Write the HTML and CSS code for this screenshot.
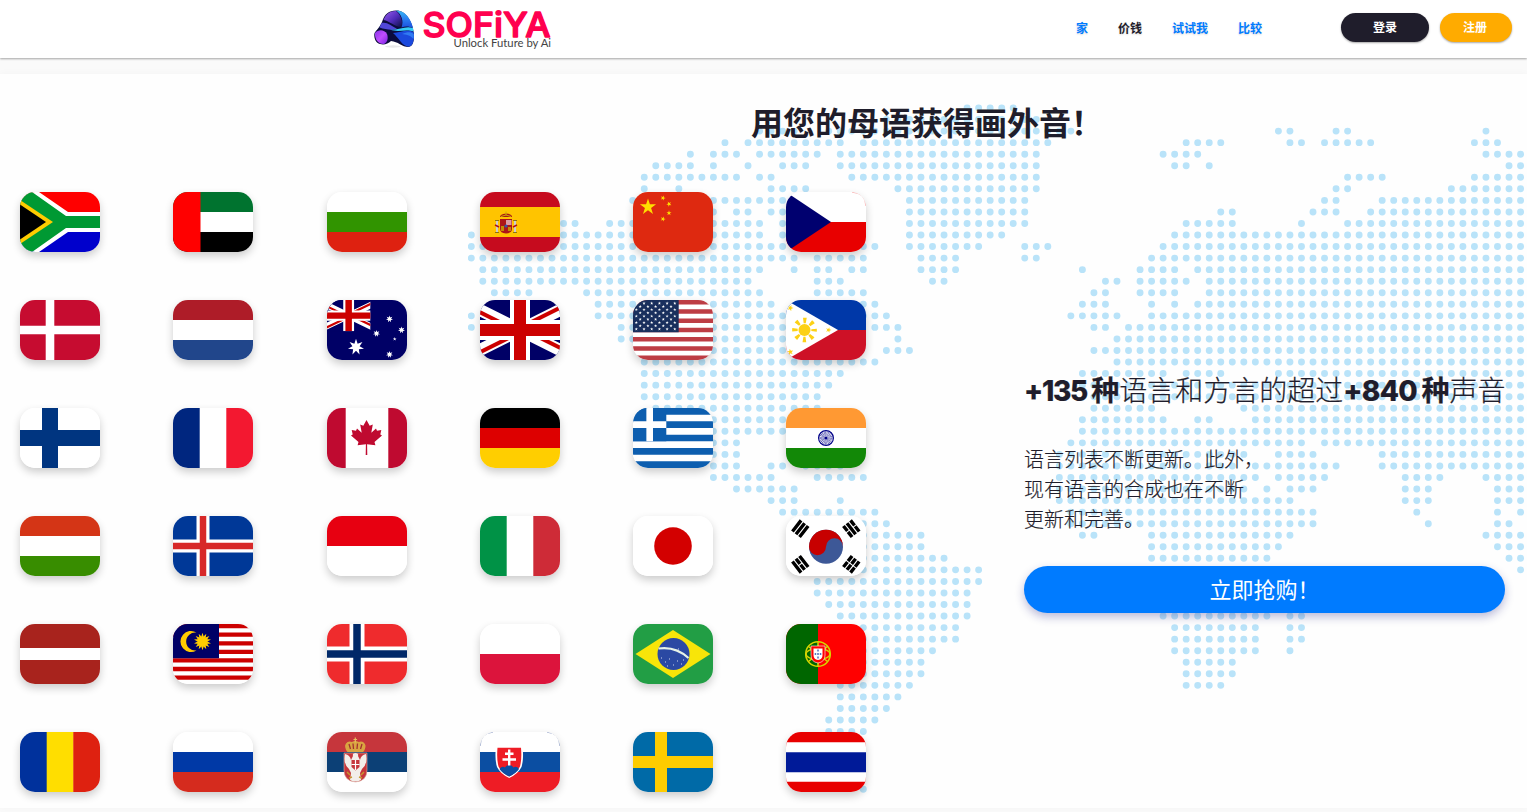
FILE: index.html
```html
<!DOCTYPE html>
<html lang="zh-CN">
<head>
<meta charset="utf-8">
<title>SOFiYA</title>
<link rel="stylesheet" href="styles.css">
</head>
<body>
<svg class="defs" width="0" height="0" aria-hidden="true">
  <defs>
    <polygon id="star5" points="0,-1 .225,-.309 .951,-.309 .363,.118 .588,.809 0,.382 -.588,.809 -.363,.118 -.951,-.309 -.225,-.309"/>
    <polygon id="star7" points="0,-1 .195,-.405 .782,-.623 .439,-.1 .975,.223 .352,.281 .434,.901 0,.45 -.434,.901 -.352,.281 -.975,.223 -.439,-.1 -.782,-.623 -.195,-.405"/>
    <clipPath id="jackClip"><path d="M30 15h30v15zv15h-30zh-30v-15zv-15h30z"/></clipPath>
    <symbol id="jack" viewBox="10 0 40 30" preserveAspectRatio="none">
      <path fill="#006" d="M0 0h60v30H0z"/>
      <path d="M0 0l60 30M60 0L0 30" stroke="#fff" stroke-width="6"/>
      <path d="M0 0l60 30M60 0L0 30" stroke="#c00" stroke-width="4" clip-path="url(#jackClip)"/>
      <path d="M30 0v30M0 15h60" stroke="#fff" stroke-width="10"/>
      <path d="M30 0v30M0 15h60" stroke="#c00" stroke-width="6"/>
    </symbol>
    <g id="starRowA" fill="#fff">
      <use href="#star5" transform="translate(3.300 0) scale(1.700)"/><use href="#star5" transform="translate(11 0) scale(1.700)"/><use href="#star5" transform="translate(18.700 0) scale(1.700)"/><use href="#star5" transform="translate(26.400 0) scale(1.700)"/><use href="#star5" transform="translate(34.100 0) scale(1.700)"/><use href="#star5" transform="translate(41.800 0) scale(1.700)"/>
    </g>
    <g id="starRowB" fill="#fff">
      <use href="#star5" transform="translate(7.200 0) scale(1.700)"/><use href="#star5" transform="translate(14.900 0) scale(1.700)"/><use href="#star5" transform="translate(22.600 0) scale(1.700)"/><use href="#star5" transform="translate(30.300 0) scale(1.700)"/><use href="#star5" transform="translate(38 0) scale(1.700)"/>
    </g>
    <linearGradient id="lgA" x1="0" y1="0" x2="1" y2="1"><stop offset="0" stop-color="#9a5cf0"/><stop offset=".55" stop-color="#4d2bb8"/><stop offset="1" stop-color="#0b1040"/></linearGradient>
    <linearGradient id="lgB" x1="0" y1="0" x2="0" y2="1"><stop offset="0" stop-color="#37b8f5"/><stop offset=".5" stop-color="#2a7df0"/><stop offset="1" stop-color="#1a4fe0"/></linearGradient>
    <linearGradient id="lgC" x1="0" y1="0" x2="1" y2="1"><stop offset="0" stop-color="#8a34e8"/><stop offset=".5" stop-color="#c04dff"/><stop offset="1" stop-color="#7a22e0"/></linearGradient>
  </defs>
</svg>

<header class="topbar">
  <a class="brand" href="#">
    <svg width="180" height="48" viewBox="373 3 180 48">
      <ellipse cx="393" cy="45.500" rx="8" ry="1.200" fill="#e8e8ea"/>
      <path d="M374.300 33C375 30 379.500 27 382 21C384.500 13 389 9.500 396 9.500C405 9 412.500 20 413.800 32C414.500 40 413 45.500 408.500 46C402 46 398 40.500 391 40C388 43 384 44 380 43C376 42 374 38 374.300 33Z" fill="#0b0c3c"/>
      <path d="M383.500 19C386 12.500 391 9.600 396 10C400 13 403 19 402 26C395 26.500 390 20 383.500 19Z" fill="url(#lgA)"/>
      <path d="M396 9.500C405 9 411 18 413 27C409 25 405 25 401.500 26.500C404 20 401.500 13 396 9.500Z" fill="url(#lgB)"/>
      <path d="M381.500 22C387 20.500 391 25 397 27.500C392 30 386 28.500 379.500 26.500Z" fill="#5147d8"/>
      <path d="M390 28.500C398 30 404 24.500 413 27L413.600 30.500C405 27.500 399 32 390 28.500Z" fill="#35cdf7"/>
      <path d="M393 32C400 31 408 28 413.600 31C414.600 39 413 45.500 408.500 45.700C402 45 399 37 393 32Z" fill="#1b49dd"/>
      <path d="M402 33C408 30.500 411 31 413.700 33C413.900 35 413.800 37 413.600 38C410 34 406 33.500 402 33Z" fill="#2f7af2"/>
      <path d="M375 32C378 28.500 384 28 387 33C388.500 37 387.500 41.500 384 43C379 43.500 374.500 39 375 32Z" fill="url(#lgC)"/>
      <text x="422.500" y="35.500" class="brand-name" textLength="128" lengthAdjust="spacingAndGlyphs">SOFiYA</text>
      <text x="453.500" y="45.500" class="brand-tag" textLength="97.500" lengthAdjust="spacingAndGlyphs">Unlock Future by Ai</text>
    </svg>
  </a>
  <nav class="nav">
    <a href="#">家</a><a href="#" class="current">价钱</a><a href="#">试试我</a><a href="#">比较</a>
  </nav>
  <div class="account">
    <a class="pill pill-dark" href="#">登录</a>
    <a class="pill pill-amber" href="#">注册</a>
  </div>
</header>

<main class="hero">
  <svg class="map" width="1059" height="701" viewBox="-.286 -.78 91.845 60.71" preserveAspectRatio="none">
    <path class="dots" d="M43 0h4.100M36 1h13.100M25 2h3.100M31 2h21.100M70 2h1.100M75 2h1.100M88 2h.1
    M22 3h.1M24 3h8.100M34 3h16.100M62 3h3.100M71 3h1.100M74 3h4.100M87 3h2.100
    M19 4h.1M21 4h2.100M25 4h5.100M32 4h17.100M60 4h3.100M88 4h3.100
    M16 5h3.100M21 5h.1M24 5h.1M27 5h2.100M32 5h17.100M61 5h1.100M64 5h.1M90 5h1.100
    M15 6h8.100M25 6h1.100M33 6h16.100M76 6h3.100M87 6h4.100
    M15 7h.1M18 7h.1M26 7h3.100M37 7h12.100M75 7h1.100M85 7h6.100
    M14 8h13.100M38 8h10.100M74 8h1.100M79 8h12.100
    M21 9h.1M23 9h1.100M26 9h1.100M38 9h10.100M65 9h1.100M73 9h2.100M78 9h13.100
    M8 10h1.100M12 10h2.100M21 10h4.100M27 10h.1M38 10h10.100M62 10h4.100M72 10h.1M76 10h15.100
    M0 11h.1M8 11h17.100M27 11h.1M38 11h8.100M61 11h30.100
    M0 12h27.100M34 12h1.100M38 12h6.100M48 12h2.100M60 12h31.100
    M0 13h28.100M30 13h4.100M39 13h3.100M48 13h1.100M59 13h32.100
    M1 14h24.100M28 14h.1M30 14h1.100M33 14h1.100M39 14h3.100M53 14h.1M58 14h3.100M63 14h28.100
    M1 15h23.100M30 15h2.100M40 15h1.100M55 15h1.100M58 15h4.100M64 15h27.100
    M2 16h3.100M10 16h15.100M30 16h4.100M54 16h1.100M58 16h3.100M64 16h27.100
    M11 17h15.100M34 17h1.100M53 17h2.100M59 17h.1M61 17h.1M63 17h28.100
    M0 18h.1M11 18h16.100M34 18h2.100M52 18h4.100M59 18h32.100
    M0 19h.1M13 19h14.100M35 19h2.100M54 19h1.100M57 19h34.100
    M13 20h14.100M37 20h.1M56 20h35.100M15 21h13.100M36 21h2.100M54 21h37.100
    M15 22h20.100M56 22h35.100M15 23h17.100M53 23h7.100M62 23h3.100M70 23h21.100
    M15 24h16.100M53 24h38.100M15 25h15.100M54 25h37.100
    M16 26h14.100M54 26h5.100M67 26h24.100M21 27h9.100M53 27h7.100M63 27h1.100M68 27h23.100
    M21 28h9.100M53 28h38.100M21 29h2.100M52 29h20.100M74 29h17.100
    M21 30h2.100M51 30h16.100M70 30h3.100M79 30h12.100
    M21 31h2.100M26 31h1.100M29 31h3.100M51 31h15.100M68 31h7.100M79 31h12.100
    M21 32h5.100M30 32h4.100M51 32h17.100M70 32h4.100M81 32h3.100M88 32h3.100
    M23 33h5.100M51 33h16.100M69 33h.1M71 33h2.100M81 33h2.100M89 33h2.100
    M26 34h2.100M32 34h.1M51 34h20.100M81 34h2.100M89 34h2.100
    M27 35h8.100M52 35h21.100M82 35h.1M89 35h.1M91 35h.1
    M34 36h2.100M52 36h21.100M83 36h.1M89 36h1.100
    M34 37h5.100M53 37h1.100M59 37h12.100M88 37h3.100
    M34 38h5.100M59 38h11.100M89 38h2.100M34 39h7.100M59 39h10.100M90 39h1.100
    M34 40h10.100M59 40h10.100M91 40h.1M30 41h14.100M30 42h13.100M31 43h12.100
    M32 44h11.100M60 44h9.100M71 44h1.100M34 45h8.100M61 45h7.100M71 45h1.100
    M34 46h8.100M61 46h7.100M71 46h1.100M34 47h6.100M61 47h7.100M71 47h.1
    M34 48h5.100M62 48h4.100M34 49h5.100M62 49h4.100M32 50h6.100M62 50h3.100
    M32 51h5.100M32 52h4.100M31 53h4.100M31 54h3.100M34 59h.1"/>
  </svg>

  <h1 class="title">用您的母语获得画外音！</h1>

  <div class="columns">
    <div class="flags">
      <svg class="flag" viewBox="0 0 80 60"><path fill="red" d="M0 0h80v30H0z"/><path fill="#00c" d="M0 30h80v30H0z"/><path fill="#fff" d="M0 0h19l29 20h32v20H48L19 60H0z"/><path fill="#093" d="M0 0h12l34 24h34v12H46L12 60H0z"/><path fill="#fc0" d="M0 8l33 22L0 52z"/><path d="M0 12.500L26 30 0 47.500z"/></svg>
      <svg class="flag" viewBox="0 0 80 60"><path fill="#fff" d="M0 0h80v60H0z"/><path fill="#00732f" d="M0 0h80v20H0z"/><path d="M0 40h80v20H0z"/><path fill="red" d="M0 0h27.500v60H0z"/></svg>
      <svg class="flag" viewBox="0 0 80 60"><path fill="#fff" d="M0 0h80v20H0z"/><path fill="#319400" d="M0 20h80v20H0z"/><path fill="#de2110" d="M0 40h80v20H0z"/></svg>
      <svg class="flag" viewBox="0 0 80 60"><path fill="#c60b1e" d="M0 0h80v60H0z"/><path fill="#ffc400" d="M0 15h80v30H0z"/><path fill="#ad1519" d="M20 25q0-3 6-3.500 6 .5 6 3.500z"/><path d="M21 24.500q5-3 10 0M26 19.500v4" stroke="#c8b100" fill="none"/><path fill="#ccc" d="M16 29h2v11h-2zM34 29h2v11h-2z"/><path d="M15 28.500h4M33 28.500h4M15 40.500h4M33 40.500h4" stroke="#8a7416"/><path d="M15 33l4 2M33 35l4-2" stroke="#ad1519" stroke-width="1.500"/><path fill="#ad1519" d="M20 27h12v10q0 4-6 4.500-6-.5-6-4.500z"/><path fill="#db9aa5" d="M26 28h5.500v5H26z"/><path fill="#c8b100" d="M21 34h3v5h-3zM28 35h3v4h-3z" opacity=".75"/><circle cx="26" cy="34" r="1.600" fill="#3355a8"/></svg>
      <svg class="flag" viewBox="0 0 80 60"><path fill="#de2910" d="M0 0h80v60H0z"/><g fill="#ffde00"><use href="#star5" transform="translate(15 15) scale(8.500)"/><use href="#star5" transform="translate(30 6) rotate(20) scale(2.700)"/><use href="#star5" transform="translate(36 12) rotate(45) scale(2.700)"/><use href="#star5" transform="translate(36 21) scale(2.700)"/><use href="#star5" transform="translate(30 27) rotate(20) scale(2.700)"/></g></svg>
      <svg class="flag" viewBox="0 0 80 60"><path fill="#fff" d="M0 0h80v30H0z"/><path fill="#e80000" d="M0 30h80v30H0z"/><path fill="#00006f" d="M0 0l45 30L0 60z"/><path d="M66 .2Q79.500 1 79.800 14" fill="none" stroke="#e80000" stroke-width=".5" opacity=".6"/></svg>

      <svg class="flag" viewBox="0 0 80 60"><path fill="#c60c30" d="M0 0h80v60H0z"/><path d="M30 0v60M0 30h80" stroke="#fff" stroke-width="8.600"/></svg>
      <svg class="flag" viewBox="0 0 80 60"><path fill="#fff" d="M0 0h80v60H0z"/><path fill="#ae1c28" d="M0 0h80v20H0z"/><path fill="#21468b" d="M0 40h80v20H0z"/></svg>
      <svg class="flag" viewBox="0 0 80 60"><path fill="#006" d="M0 0h80v60H0z"/><use href="#jack" width="43.300" height="31.300"/><g fill="#fff"><use href="#star7" transform="translate(29 47) scale(8.200)"/><use href="#star7" transform="translate(62.500 19) scale(3.600)"/><use href="#star7" transform="translate(49.500 33.500) scale(3.600)"/><use href="#star7" transform="translate(74.500 30) scale(3.600)"/><use href="#star5" transform="translate(67.700 39) scale(2)"/><use href="#star7" transform="translate(62.500 54.500) scale(3.600)"/></g></svg>
      <svg class="flag" viewBox="0 0 80 60"><use href="#jack" width="80" height="60"/></svg>
      <svg class="flag" viewBox="0 0 80 60"><path fill="#fff" d="M0 0h80v60H0z"/><path d="M0 2.300h80M0 11.540h80M0 20.770h80M0 30h80M0 39.230h80M0 48.460h80M0 57.700h80" stroke="#bd3d44" stroke-width="4.615"/><path fill="#192f5d" d="M0 0h45.700v32.300H0z"/><use href="#starRowA" y="3.300"/><use href="#starRowB" y="6.500"/><use href="#starRowA" y="9.700"/><use href="#starRowB" y="12.900"/><use href="#starRowA" y="16.200"/><use href="#starRowB" y="19.400"/><use href="#starRowA" y="22.600"/><use href="#starRowB" y="25.900"/><use href="#starRowA" y="29.100"/></svg>
      <svg class="flag" viewBox="0 0 80 60"><path fill="#0038a8" d="M0 0h80v30H0z"/><path fill="#ce1126" d="M0 30h80v30H0z"/><path fill="#fff" d="M0 0l52 30L0 60z"/><circle cx="18.500" cy="30" r="6" fill="#fcd116"/><circle cx="18.500" cy="30" r="9.600" fill="none" stroke="#fcd116" stroke-width="5.500" stroke-dasharray="3 4.540" stroke-dashoffset="1.500"/><g fill="#fcd116"><use href="#star5" transform="translate(4.300 8) rotate(20) scale(3.300)"/><use href="#star5" transform="translate(4.300 52) rotate(-10) scale(3.300)"/><use href="#star5" transform="translate(42.500 30) rotate(90) scale(3)"/></g></svg>

      <svg class="flag" viewBox="0 0 80 60"><path fill="#fff" d="M0 0h80v60H0z"/><path d="M30 0v60M0 30h80" stroke="#003580" stroke-width="16"/></svg>
      <svg class="flag" viewBox="0 0 80 60"><path fill="#fff" d="M0 0h80v60H0z"/><path fill="#00267f" d="M0 0h26.700v60H0z"/><path fill="#f31830" d="M53.300 0H80v60H53.300z"/></svg>
      <svg class="flag" viewBox="0 0 80 60"><path fill="#fff" d="M0 0h80v60H0z"/><path fill="#bf0a30" d="M0 0h18.700v60H0zM61.300 0H80v60H61.300z"/><path fill="#bf0a30" d="M39.500 12l3.200 5.800 3.100-1.300-1.500 8.300 4.700-4.200 1 2.200 4.300-.9-1 4.500 1.700 1.200-7.500 6.400.9 3.200-8.300-1 .2 10.800h-1.600l.2-10.800-8.300 1 .9-3.200-7.500-6.400 1.700-1.200-1-4.500 4.300.9 1-2.200 4.700 4.200-1.500-8.300 3.100 1.300z"/></svg>
      <svg class="flag" viewBox="0 0 80 60"><path d="M0 0h80v20H0z"/><path fill="#d00" d="M0 20h80v20H0z"/><path fill="#ffce00" d="M0 40h80v20H0z"/></svg>
      <svg class="flag" viewBox="0 0 80 60"><path fill="#fff" d="M0 0h80v60H0z"/><path d="M0 3.300h80M0 16.700h80M0 30h80M0 43.300h80M0 56.700h80" stroke="#0d5eaf" stroke-width="6.670"/><path fill="#0d5eaf" d="M0 0h33.300v33.300H0z"/><path d="M16.700 0v33.300M0 16.700h33.300" stroke="#fff" stroke-width="6.670"/></svg>
      <svg class="flag" viewBox="0 0 80 60"><path fill="#f93" d="M0 0h80v20H0z"/><path fill="#fff" d="M0 20h80v20H0z"/><path fill="#128807" d="M0 40h80v20H0z"/><g fill="none" stroke="#008"><circle cx="40" cy="30" r="7.400" stroke-width="1.200"/><circle cx="40" cy="30" r="4" stroke-width="5" stroke-dasharray=".5 .55" opacity=".75"/></g><circle cx="40" cy="30" r="1.600" fill="#008"/></svg>

      <svg class="flag" viewBox="0 0 80 60"><path fill="#d43516" d="M0 0h80v20H0z"/><path fill="#fff" d="M0 20h80v20H0z"/><path fill="#388d00" d="M0 40h80v20H0z"/></svg>
      <svg class="flag" viewBox="0 0 80 60"><path fill="#003897" d="M0 0h80v60H0z"/><path d="M30 0v60M0 30h80" stroke="#fff" stroke-width="13"/><path d="M30 0v60M0 30h80" stroke="#d72828" stroke-width="6.500"/></svg>
      <svg class="flag" viewBox="0 0 80 60"><path fill="#e70011" d="M0 0h80v30H0z"/><path fill="#fff" d="M0 30h80v30H0z"/></svg>
      <svg class="flag" viewBox="0 0 80 60"><path fill="#fff" d="M0 0h80v60H0z"/><path fill="#009246" d="M0 0h26.700v60H0z"/><path fill="#ce2b37" d="M53.300 0H80v60H53.300z"/></svg>
      <svg class="flag" viewBox="0 0 80 60"><path fill="#fff" d="M0 0h80v60H0z"/><circle cx="40" cy="30" r="18.800" fill="#d30000"/></svg>
      <svg class="flag" viewBox="0 0 80 60"><path fill="#fff" d="M0 0h80v60H0z"/><circle cx="40" cy="30.700" r="17" fill="#3d5897"/><path fill="#c70000" d="M23 30.700a17 17 0 0 1 34 0a8.500 8.500 0 0 0-17 0a8.500 8.500 0 0 1-17 0z"/><g stroke="#000" stroke-width="3.400" fill="none"><path transform="translate(14.300 12.700) rotate(-52)" d="M-7-4.500H7M-7 0H7M-7 4.500H7"/><path transform="translate(65.300 12.700) rotate(52)" d="M-7-4.500h6.500M.5-4.500H7M-7 0H7M-7 4.500h6.500M.5 4.500H7"/><path transform="translate(14.300 48.300) rotate(52)" d="M-7-4.500H7M-7 0h6.500M.5 0H7M-7 4.500H7"/><path transform="translate(65.300 48.300) rotate(-52)" d="M-7-4.500h6.500M.5-4.500H7M-7 0h6.500M.5 0H7M-7 4.500h6.500M.5 4.500H7"/></g></svg>

      <svg class="flag" viewBox="0 0 80 60"><path fill="#a8231d" d="M0 0h80v60H0z"/><path fill="#fff" d="M0 24h80v12H0z"/></svg>
      <svg class="flag" viewBox="0 0 80 60"><path fill="#fff" d="M0 0h80v60H0z"/><path d="M0 2.140h80M0 10.710h80M0 19.290h80M0 27.860h80M0 36.430h80M0 45h80M0 53.570h80" stroke="#c00" stroke-width="4.290"/><path fill="#006" d="M0 0h46v34.300H0z"/><path fill="#fc0" d="M23.500 8.600a10.500 10.500 0 1 0 0 17.800 9 9 0 1 1 0-17.800z"/><g fill="#fc0"><use href="#star7" transform="translate(29.500 17.500) scale(8.700)"/><use href="#star7" transform="translate(29.500 17.500) rotate(25.700) scale(8.700)"/></g></svg>
      <svg class="flag" viewBox="0 0 80 60"><path fill="#ef2b2d" d="M0 0h80v60H0z"/><path d="M30 0v60M0 30h80" stroke="#fff" stroke-width="15"/><path d="M30 0v60M0 30h80" stroke="#002868" stroke-width="7.500"/></svg>
      <svg class="flag" viewBox="0 0 80 60"><path fill="#fff" d="M0 0h80v30H0z"/><path fill="#dc143c" d="M0 30h80v30H0z"/></svg>
      <svg class="flag" viewBox="0 0 80 60"><path fill="#229e45" d="M0 0h80v60H0z"/><path fill="#f8e509" d="M2.500 30L40 6l37.500 24L40 54z"/><circle cx="40.500" cy="30" r="16" fill="#2b49a3"/><path d="M25.500 24.500q17-2.500 30 9.500" fill="none" stroke="#e6f2e8" stroke-width="2.200"/><path d="M28 34h1M32 38h1M36 35h1M40 41h1M44 37h1M48 40h1M34 42h1M50 36h1M45 25h1" stroke="#cfd8ee"/></svg>
      <svg class="flag" viewBox="0 0 80 60"><path fill="red" d="M0 0h80v60H0z"/><path fill="#060" d="M0 0h32v60H0z"/><g fill="none" stroke="#d6d500" stroke-width="1.500"><circle cx="32" cy="30" r="12.300"/><ellipse cx="32" cy="30" rx="12" ry="5.500"/><path d="M32 17.500v25M22.500 22.500l19 15M41.500 22.500l-19 15"/></g><path fill="red" stroke="#fff" stroke-width=".6" d="M25 22h14v9q0 7-7 8-7-1-7-8z"/><path fill="#fff" d="M27.500 24.500h9v6.500q0 4.500-4.500 5-4.500-.5-4.500-5z"/><path fill="#5a75c0" d="M31.200 25.500h1.600v2h-1.600zM31.200 29h1.600v2h-1.600zM28.700 29h1.500v2h-1.500zM33.800 29h1.500v2h-1.500zM31.200 32.500h1.600v2h-1.600z"/></svg>

      <svg class="flag" viewBox="0 0 80 60"><path fill="#00319c" d="M0 0h27v60H0z"/><path fill="#ffde00" d="M26.700 0h27v60h-27z"/><path fill="#de2110" d="M53.300 0H80v60H53.300z"/></svg>
      <svg class="flag" viewBox="0 0 80 60"><path fill="#fff" d="M0 0h80v20H0z"/><path fill="#0039a6" d="M0 20h80v20H0z"/><path fill="#d52b1e" d="M0 40h80v20H0z"/></svg>
      <svg class="flag" viewBox="0 0 80 60"><path fill="#c6363c" d="M0 0h80v20H0z"/><path fill="#0c4076" d="M0 20h80v20H0z"/><path fill="#fff" d="M0 40h80v20H0z"/><path fill="#d9a441" d="M20.500 20q-4-5-1.500-8.500 2-3 6-1.500 3.300-2 6.600 0 4-1.500 6 1.500 2.500 3.500-1.500 8.500z"/><path d="M28.300 5.500v5M26.500 7.500h3.600" stroke="#e6c060" stroke-width="1.200"/><path d="M22 12l1.500 5M26 11.500l.5 5.500M30.500 11.500l-.5 5.500M35 12l-1.500 5" stroke="#a53030" stroke-width="1.300"/><path fill="#c6363c" stroke="#d9b3a5" stroke-width=".6" d="M17 21h23v17q0 11-11.500 12Q17 49 17 38z"/><path fill="#f2eee9" d="M18 22q5 1 6 6l2-4q-1-3 2.500-3t2.500 3l2 4q1-5 6-6 2 10-4 15l-2 4 1 7q-6 3-11 0l1-7-2-4q-6-5-4-15z"/><path fill="#c6363c" d="M24.500 28h8v7l-4 3.500-4-3.500z"/><path d="M28.500 28v10M24.500 32.500h8" stroke="#fff" stroke-width="1.200"/><path d="M20 40l3 3M37 40l-3 3M22 46l3-1M35 46l-3-1" stroke="#c6992f" stroke-width="1.500"/></svg>
      <svg class="flag" viewBox="0 0 80 60"><path fill="#fff" d="M0 0h80v20H0z"/><path fill="#0b4ea2" d="M0 20h80v20H0z"/><path fill="#ee1c25" d="M0 40h80v20H0z"/><path d="M.2 14Q.5 1 13 .2M67 .2Q79.500 1 79.800 14" fill="none" stroke="#0b2e82" stroke-width=".6" opacity=".7"/><path fill="#fff" d="M16 14.500h26.500q1.500 12-1 20.500Q38 42 29.200 46 20.500 42 17 35q-2.500-8.500-1-20.500z"/><path fill="#ee1c25" d="M17.500 15.700H41q1 11-1 18.800Q36.500 41 29.200 44.500 22 41 18.500 34.500q-2-7.800-1-18.800z"/><path fill="#0b4ea2" d="M19.500 37q2.500-3.500 5.500-1.500 1-2.500 4.200-2.500t4.300 2.500q3-2 5.500 1.500-3.500 5-9.800 7.500-6.300-2.500-9.700-7.500z"/><path d="M29.200 17.500v16M25 21.800h8.500M22.500 27.500h13.500" stroke="#fff" stroke-width="2.400"/></svg>
      <svg class="flag" viewBox="0 0 80 60"><path fill="#006aa7" d="M0 0h80v60H0z"/><path fill="#fecc00" d="M22 0h12v60H22z"/><path fill="#fecc00" d="M0 24h80v12H0z"/></svg>
      <svg class="flag" viewBox="0 0 80 60"><path fill="#e80000" d="M0 0h80v60H0z"/><path fill="#fff" d="M0 10.200h80v39.600H0z"/><path fill="#001a98" d="M0 20.200h80v20H0z"/></svg>
    </div>

    <section class="pitch">
      <h2 class="lead"><b><span class="num num-languages">+135</span> 种</b>语言和方言的超过<b><span class="num num-voices">+840</span> 种</b>声音</h2>
      <p class="note">语言列表不断更新。此外，<br>现有语言的合成也在不断<br>更新和完善。</p>
      <a class="cta" href="#">立即抢购！</a>
    </section>
  </div>
</main>
</body>
</html>
```
FILE: styles.css
```css
* { box-sizing: border-box; }

body {
  margin: 0;
  height: 812px;
  overflow: hidden;
  background: #fafafa;
  color: #1f1d2b;
  font-family: "Open Sans", "Noto Sans CJK SC", sans-serif;
}

a { text-decoration: none; }

.defs { position: absolute; }

.topbar {
  display: flex;
  align-items: center;
  height: 58px;
  padding: 0 15px 3px 373px;
  background: #fff;
  box-shadow: 0 1px 2px rgba(0, 0, 0, .35);
}

.brand, .brand svg { display: block; }

.brand-name {
  font: 500 34.5px Inter, sans-serif;
  fill: #ff004f;
  stroke: #ff004f;
  stroke-width: 1.4px;
  stroke-linejoin: round;
}

.brand-tag {
  font: 400 10.5px Lato, sans-serif;
  fill: #444;
}

.nav {
  display: flex;
  gap: 30px;
  margin-left: auto;
  font-size: 12px;
  font-weight: 700;
  text-shadow: 0 1px 2px rgba(0, 0, 0, .15);
}

.nav a { color: #007bff; }
.nav a.current { color: #1f1d2b; }

.account {
  display: flex;
  gap: 11px;
  margin-left: 79px;
}

.pill {
  height: 29px;
  border-radius: 15px;
  color: #fff;
  font-size: 12px;
  font-weight: 700;
  line-height: 29px;
  text-align: center;
  box-shadow: 0 1px 2px rgba(0, 0, 0, .35);
}

.pill-dark { width: 88px; background: #1f1d2b; }
.pill-amber { width: 72px; padding-right: 2px; background: #ffab00; }

.hero {
  position: relative;
  height: 734px;
  margin-top: 16px;
  background: #fefefe;
  box-shadow: 0 0 8px rgba(0, 0, 0, .03);
}

.map {
  position: absolute;
  top: 25px;
  right: 0;
}

.dots {
  fill: none;
  stroke: #b9e3f9;
  stroke-width: .6;
  stroke-linecap: round;
  stroke-dasharray: 0 1;
}

.title {
  position: relative;
  margin: 0;
  padding: 26px 0 0 751px;
  font-size: 32px;
  font-weight: 700;
  line-height: 46px;
}

.columns {
  position: relative;
  display: flex;
  align-items: flex-start;
  padding: 46px 22px 0 20px;
}

.flags {
  display: grid;
  grid-template-columns: repeat(6, 80px);
  column-gap: 73.25px;
  row-gap: 48px;
}

.flag {
  display: block;
  width: 80px;
  height: 60px;
  border-radius: 15px;
  box-shadow: 0 4px 8px rgba(0, 0, 0, .2);
}

.pitch {
  width: 481px;
  margin-left: auto;
  padding-top: 178px;
}

.lead {
  margin: 0;
  font-size: 28px;
  font-weight: 300;
  line-height: 40px;
  white-space: nowrap;
  word-spacing: -3px;
  -webkit-text-stroke: .2px;
}

.lead b { font-weight: 700; }

.num {
  display: inline-block;
  font-family: Inter, sans-serif;
  font-weight: 800;
}

.num-languages { width: 63px; letter-spacing: -1.3px; }
.num-voices { width: 74px; letter-spacing: -.7px; }

.note {
  margin: 34px 0 0;
  font-size: 20px;
  font-weight: 300;
  line-height: 30px;
  -webkit-text-stroke: .15px;
}

.cta {
  display: block;
  height: 47px;
  margin-top: 31px;
  border-radius: 24px;
  background: #007bff;
  color: #fff;
  font-size: 22px;
  line-height: 46px;
  text-align: center;
  box-shadow: 0 4px 10px rgba(31, 29, 130, .3);
}
```
